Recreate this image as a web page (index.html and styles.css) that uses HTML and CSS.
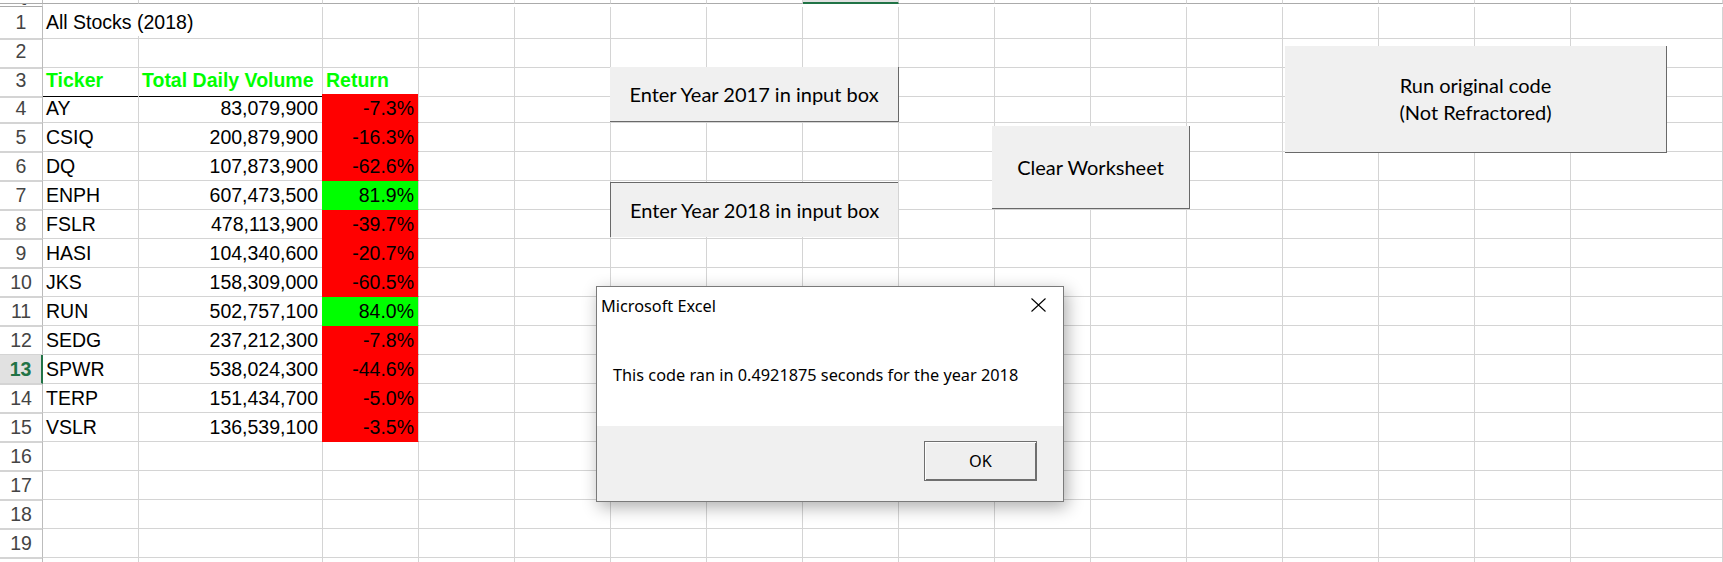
FILE: index.html
```html
<!DOCTYPE html>
<html lang="en">
<head>
<meta charset="utf-8">
<title>All Stocks (2018)</title>
<link rel="stylesheet" href="styles.css">
</head>
<body>
<div class="sheet">
  <div class="row colhead">
    <div class="rh"></div>
    <div><span>A</span></div><div><span>B</span></div><div><span>C</span></div><div><span>D</span></div>
    <div><span>E</span></div><div><span>F</span></div><div><span>G</span></div><div class="sel"><span>H</span></div>
    <div><span>I</span></div><div><span>J</span></div><div><span>K</span></div><div><span>L</span></div>
    <div><span>M</span></div><div><span>N</span></div><div><span>O</span></div><div><span>P</span></div>
    <div><span>Q</span></div>
  </div>
  <div class="row up"><div class="rh">1</div><div class="spill">All Stocks (2018)</div><div></div><div></div><div></div><div></div><div></div><div></div><div></div><div></div><div></div><div></div><div></div><div></div><div></div><div></div><div></div><div></div></div>
  <div class="row up"><div class="rh">2</div><div></div><div></div><div></div><div></div><div></div><div></div><div></div><div></div><div></div><div></div><div></div><div></div><div></div><div></div><div></div><div></div><div></div></div>
  <div class="row up"><div class="rh">3</div><div class="hdr hb">Ticker</div><div class="hdr hb">Total Daily Volume</div><div class="hdr hb">Return</div><div></div><div></div><div></div><div></div><div></div><div></div><div></div><div></div><div></div><div></div><div></div><div></div><div></div><div></div></div>
  <div class="row"><div class="rh">4</div><div>AY</div><div class="num">83,079,900</div><div class="num neg">-7.3%</div><div></div><div></div><div></div><div></div><div></div><div></div><div></div><div></div><div></div><div></div><div></div><div></div><div></div><div></div></div>
  <div class="row"><div class="rh">5</div><div>CSIQ</div><div class="num">200,879,900</div><div class="num neg">-16.3%</div><div></div><div></div><div></div><div></div><div></div><div></div><div></div><div></div><div></div><div></div><div></div><div></div><div></div><div></div></div>
  <div class="row"><div class="rh">6</div><div>DQ</div><div class="num">107,873,900</div><div class="num neg">-62.6%</div><div></div><div></div><div></div><div></div><div></div><div></div><div></div><div></div><div></div><div></div><div></div><div></div><div></div><div></div></div>
  <div class="row"><div class="rh">7</div><div>ENPH</div><div class="num">607,473,500</div><div class="num pos">81.9%</div><div></div><div></div><div></div><div></div><div></div><div></div><div></div><div></div><div></div><div></div><div></div><div></div><div></div><div></div></div>
  <div class="row"><div class="rh">8</div><div>FSLR</div><div class="num">478,113,900</div><div class="num neg">-39.7%</div><div></div><div></div><div></div><div></div><div></div><div></div><div></div><div></div><div></div><div></div><div></div><div></div><div></div><div></div></div>
  <div class="row"><div class="rh">9</div><div>HASI</div><div class="num">104,340,600</div><div class="num neg">-20.7%</div><div></div><div></div><div></div><div></div><div></div><div></div><div></div><div></div><div></div><div></div><div></div><div></div><div></div><div></div></div>
  <div class="row"><div class="rh">10</div><div>JKS</div><div class="num">158,309,000</div><div class="num neg">-60.5%</div><div></div><div></div><div></div><div></div><div></div><div></div><div></div><div></div><div></div><div></div><div></div><div></div><div></div><div></div></div>
  <div class="row"><div class="rh">11</div><div>RUN</div><div class="num">502,757,100</div><div class="num pos">84.0%</div><div></div><div></div><div></div><div></div><div></div><div></div><div></div><div></div><div></div><div></div><div></div><div></div><div></div><div></div></div>
  <div class="row"><div class="rh">12</div><div>SEDG</div><div class="num">237,212,300</div><div class="num neg">-7.8%</div><div></div><div></div><div></div><div></div><div></div><div></div><div></div><div></div><div></div><div></div><div></div><div></div><div></div><div></div></div>
  <div class="row"><div class="rh rsel">13</div><div>SPWR</div><div class="num">538,024,300</div><div class="num neg">-44.6%</div><div></div><div></div><div></div><div></div><div></div><div></div><div></div><div></div><div></div><div></div><div></div><div></div><div></div><div></div></div>
  <div class="row"><div class="rh">14</div><div>TERP</div><div class="num">151,434,700</div><div class="num neg">-5.0%</div><div></div><div></div><div></div><div></div><div></div><div></div><div></div><div></div><div></div><div></div><div></div><div></div><div></div><div></div></div>
  <div class="row"><div class="rh">15</div><div>VSLR</div><div class="num">136,539,100</div><div class="num neg">-3.5%</div><div></div><div></div><div></div><div></div><div></div><div></div><div></div><div></div><div></div><div></div><div></div><div></div><div></div><div></div></div>
  <div class="row"><div class="rh">16</div><div></div><div></div><div></div><div></div><div></div><div></div><div></div><div></div><div></div><div></div><div></div><div></div><div></div><div></div><div></div><div></div><div></div></div>
  <div class="row"><div class="rh">17</div><div></div><div></div><div></div><div></div><div></div><div></div><div></div><div></div><div></div><div></div><div></div><div></div><div></div><div></div><div></div><div></div><div></div></div>
  <div class="row"><div class="rh">18</div><div></div><div></div><div></div><div></div><div></div><div></div><div></div><div></div><div></div><div></div><div></div><div></div><div></div><div></div><div></div><div></div><div></div></div>
  <div class="row"><div class="rh">19</div><div></div><div></div><div></div><div></div><div></div><div></div><div></div><div></div><div></div><div></div><div></div><div></div><div></div><div></div><div></div><div></div><div></div></div>
  <div class="row"><div class="rh"></div><div></div><div></div><div></div><div></div><div></div><div></div><div></div><div></div><div></div><div></div><div></div><div></div><div></div><div></div><div></div><div></div><div></div></div>

  <div class="btn raised b2017">Enter Year 2017 in input box</div>
  <div class="btn pressed b2018">Enter Year 2018 in input box</div>
  <div class="btn raised bclear">Clear Worksheet</div>
  <div class="btn raised brun">Run original code<br>(Not Refractored)</div>

  <div class="dialog">
    <div class="dlg-title">
      <span>Microsoft Excel</span>
      <svg class="close" width="15" height="14" viewBox="0 0 15 14"><path d="M0.5 0.5L14.5 13.5M14.5 0.5L0.5 13.5" stroke="#000" stroke-width="1.1" fill="none"/></svg>
    </div>
    <div class="dlg-body">This code ran in 0.4921875 seconds for the year 2018</div>
    <div class="dlg-foot"><div class="ok">OK</div></div>
  </div>
</div>
</body>
</html>
```
FILE: styles.css
```css
* { box-sizing: border-box; }
html, body { margin: 0; padding: 0; }
body {
  width: 1723px;
  height: 562px;
  overflow: hidden;
  background: #fff;
  color: #000;
  font-family: "Liberation Sans", Arial, sans-serif;
  font-size: 19.5px;
}
.sheet {
  position: relative;
  width: 1723px;
  height: 562px;
  overflow: hidden;
  display: flex;
  flex-direction: column;
}
.row {
  display: grid;
  grid-template-columns: 43px 96px 184px repeat(13, 96px) 1fr;
  height: 29px;
  flex: none;
}
.row > div {
  border-right: 1px solid #d4d4d4;
  border-bottom: 1px solid #d4d4d4;
  line-height: 28px;
  white-space: nowrap;
  padding: 0 4px 0 3px;
}
.row.up > div { line-height: 31px; }
.row > .rh {
  text-align: center;
  color: #444;
  padding: 0;
  border-right-color: #bcbcbc;
}
.row > .rsel {
  background: #e1e1e1;
  color: #217346;
  font-weight: 700;
  border-right: 2px solid #217346;
}
.row > .spill { border-right-color: transparent; }
.num { text-align: right; }
.hdr { color: #00ff00; font-weight: 700; }
.row > .hb { border-bottom-color: #000; }
.row > .neg {
  background: #ff0000;
  border-bottom-color: #ff0000;
  box-shadow: -1px 0 0 #ff0000;
}
.row > .pos {
  background: #00ff00;
  border-bottom-color: #00ff00;
  box-shadow: -1px 0 0 #00ff00;
}

/* column header strip (scrolled, only the bottoms of the letters show) */
.row.colhead { height: 7px; }
.colhead > div {
  display: flex;
  align-items: flex-end;
  justify-content: center;
  overflow: hidden;
  padding: 0;
  line-height: 19px;
  color: #444;
  border-bottom-color: #ababab;
}
.colhead > div > span { margin-bottom: 2px; }
.colhead > .sel {
  background: #e1e1e1;
  border-bottom: 2px solid #217346;
  color: #217346;
}
.colhead > .sel > span { margin-bottom: 1px; }

/* form buttons placed on the worksheet */
.btn {
  position: absolute;
  background: #f0f0f0;
  display: flex;
  align-items: center;
  justify-content: center;
  text-align: center;
  font-family: Lato, "Liberation Sans", sans-serif;
  font-size: 20px;
  line-height: 27px;
  color: #000;
}
.raised { border-right: 1px solid #696969; border-bottom: 1px solid #696969; }
.pressed { border-left: 1px solid #696969; border-top: 1px solid #696969; }
.b2017 { left: 610px; top: 67px; width: 289px; height: 55px; }
.b2018 { left: 610px; top: 182px; width: 288px; height: 55px; }
.bclear { left: 992px; top: 126px; width: 198px; height: 83px; }
.brun { left: 1285px; top: 46px; width: 382px; height: 107px; }

/* message box */
.dialog {
  position: absolute;
  left: 596px;
  top: 286px;
  width: 468px;
  height: 216px;
  border: 1px solid #7a7a7a;
  background: #fff;
  box-shadow: 3px 5px 16px rgba(0, 0, 0, 0.32);
  display: flex;
  flex-direction: column;
  font-family: "Noto Sans", "Open Sans", sans-serif;
  font-size: 16.3px;
  color: #000;
}
.dlg-title {
  height: 44px;
  flex: none;
  display: flex;
  justify-content: space-between;
  align-items: flex-start;
  padding: 9px 0 0 4px;
  line-height: 20px;
}
.close { margin: 2px 17px 0 0; flex: none; }
.dlg-body {
  height: 95px;
  flex: none;
  padding: 34px 0 0 16px;
  line-height: 20px;
  white-space: nowrap;
}
.dlg-foot {
  flex: 1;
  background: #f0f0f0;
  display: flex;
  justify-content: flex-end;
  align-items: flex-start;
  padding: 15px 26px 0 0;
}
.ok {
  width: 113px;
  height: 40px;
  border: 1px solid #6f6f6f;
  box-shadow: inset 1px 1px 0 #fdfdfd, inset -1px -1px 0 #6f6f6f;
  background: #efefef;
  display: flex;
  align-items: center;
  justify-content: center;
  line-height: 20px;
}
```
